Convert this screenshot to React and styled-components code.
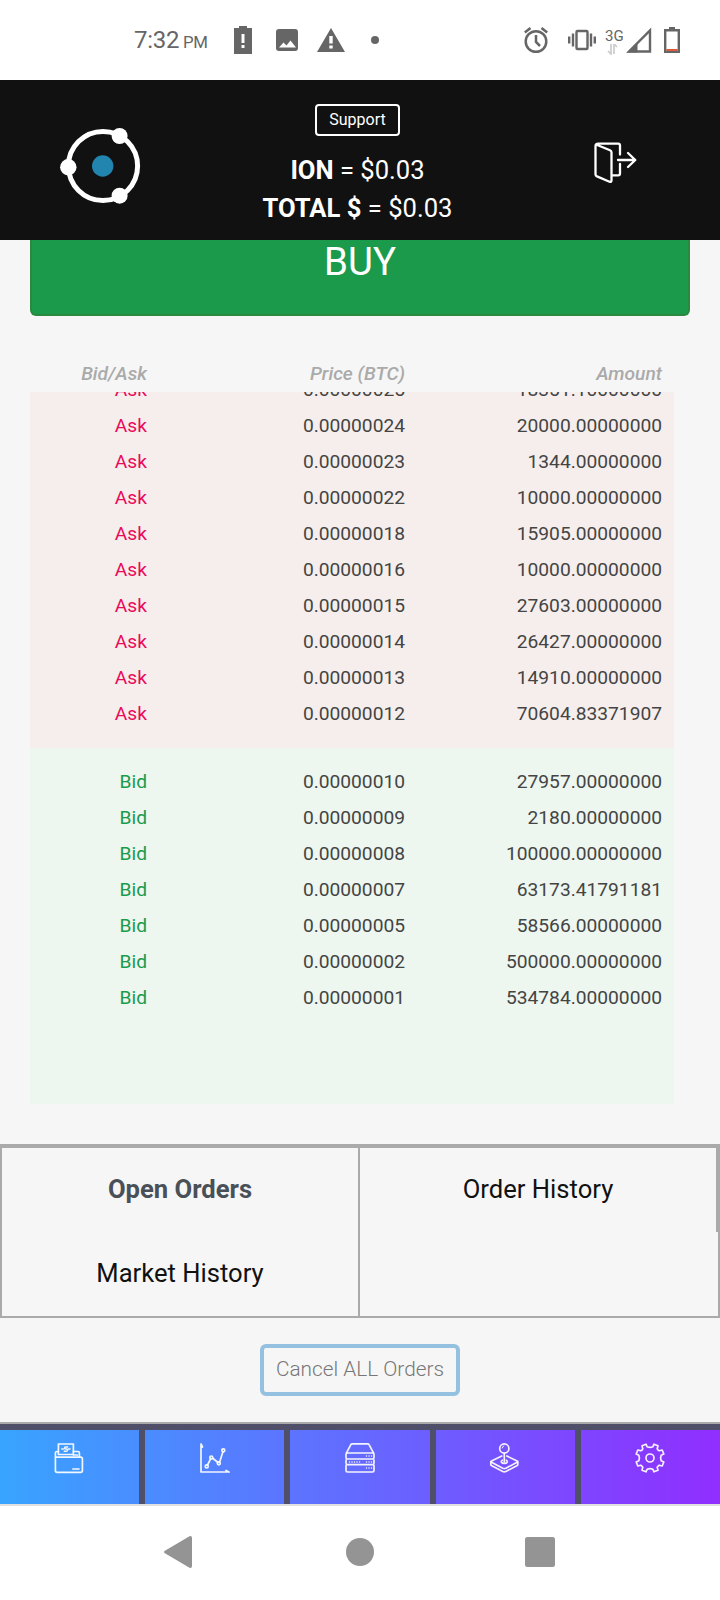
import React from 'react';
import styled, { createGlobalStyle } from 'styled-components';

const GlobalStyle = createGlobalStyle`
  * { box-sizing: border-box; }
  body { margin: 0; background: #f6f6f6; font-family: Roboto, sans-serif; }
  svg { display: block; flex: none; }
`;

const Screen = styled.div`
  width: 720px;
  height: 1600px;
  display: flex;
  flex-direction: column;
  overflow: hidden;
  background: #f6f6f6;
`;

const StatusBar = styled.div`
  height: 80px;
  flex: none;
  display: flex;
  align-items: center;
  padding-left: 134px;
  background: #fff;
  color: #666;
`;

const Clock = styled.div`
  width: 100px;
  font-size: 24px;
  line-height: 28px;
  padding-top: 2px;
  white-space: nowrap;
  letter-spacing: -0.3px;
`;

const Meridiem = styled.span`
  font-size: 16.8px;
  margin-left: 4px;
`;

const StatusIcon = styled.svg`
  margin-left: ${(p) => p.$gap || 0}px;
`;

const Network = styled.div`
  width: 21px;
  height: 28px;
  margin-left: 9px;
  padding-top: 2px;
  font-size: 15px;
  line-height: 16px;
`;

const Header = styled.header`
  height: 160px;
  flex: none;
  display: grid;
  grid-template-columns: 200px 315px 205px;
  background: #111;
  color: #fff;
`;

const LogoCell = styled.div`
  padding: 46px 0 0 58px;
`;

const Balances = styled.div`
  display: flex;
  flex-direction: column;
  align-items: center;
  padding-top: 24px;
`;

const SupportButton = styled.button`
  width: 85px;
  height: 32px;
  padding: 0;
  margin-bottom: 15px;
  border: 2px solid #fff;
  border-radius: 4px;
  background: transparent;
  color: #fff;
  font: 400 16px/26px Roboto, sans-serif;
`;

const BalanceLine = styled.div`
  font-size: 25.6px;
  line-height: 38px;
  white-space: nowrap;
`;

const ExitCell = styled.div`
  padding: 60px 0 0 77px;
`;

const BuyButton = styled.button`
  width: 660px;
  height: 76px;
  flex: none;
  margin: 0 30px;
  padding: 0 0 30px;
  border: 2px solid #2a883f;
  border-top: 0;
  border-radius: 0 0 6px 6px;
  background: #1b9a4b;
  color: #fff;
  font: 400 38.4px/40px Roboto, sans-serif;
`;

const OrderRow = styled.div`
  display: grid;
  grid-template-columns: 129px 258px 257px;
  height: 36px;
  font-size: 19.2px;
  line-height: 36px;
  text-align: right;
  color: #444;
`;

const Cell = styled.span`
  padding-right: 12px;
  white-space: nowrap;
  color: ${(p) => p.$color || 'inherit'};
`;

const TableHead = styled(OrderRow)`
  width: 644px;
  flex: none;
  margin: 40px 0 0 30px;
  font-style: italic;
  font-weight: 500;
  color: #aaa;
`;

const BookSide = styled.div`
  width: 644px;
  height: 356px;
  flex: none;
  margin-left: 30px;
  overflow: hidden;
  display: flex;
  flex-direction: column;
  justify-content: ${(p) => (p.$ask ? 'flex-end' : 'flex-start')};
  padding: 16px 0;
  background: ${(p) => (p.$ask ? '#f6eeec' : '#edf6ef')};
  ${OrderRow} { flex: none; }
`;

const Tabs = styled.div`
  height: 174px;
  flex: none;
  margin-top: 40px;
  display: grid;
  grid-template-columns: 358px 358px;
  grid-template-rows: 86px 84px;
  border: 2px solid #aaa;
`;

const Tab = styled.div`
  display: flex;
  align-items: center;
  justify-content: center;
  padding-bottom: 2px;
  font-size: 25.6px;
  line-height: 30px;
  white-space: nowrap;
  color: ${(p) => (p.$active ? '#495057' : '#111')};
  font-weight: ${(p) => (p.$active ? 700 : 400)};
  border-right: 2px solid #aaa;
  border-top: ${(p) => (p.$first ? '2px solid #aaa' : '0')};
`;

const Actions = styled.div`
  height: 104px;
  flex: none;
  display: flex;
  justify-content: center;
  padding-top: 26px;
`;

const CancelButton = styled.button`
  width: 200px;
  height: 52px;
  padding: 0 0 2px;
  border: 4px solid #94c1e0;
  border-radius: 6px;
  background: transparent;
  color: #777;
  font: 300 20.8px/30px Roboto, sans-serif;
  white-space: nowrap;
`;

const NavBar = styled.nav`
  height: 84px;
  flex: none;
  display: flex;
  border-top: 2px solid #aaa;
  border-bottom: 2px solid #e0e0e0;
  background: linear-gradient(90deg, #38a4ff, #902eff) padding-box;
`;

const NavItem = styled.div`
  flex: 1;
  border-top: 6px solid #4f4f69;
  display: flex;
  justify-content: center;
  padding: 12px 0 0;
`;

const NavDivider = styled.div`
  width: 6px;
  background: #4f4f69;
`;

const SystemBar = styled.div`
  flex: 1;
  display: flex;
  padding: 29px 0 0 163px;
  background: #fff;
`;

const SystemIcon = styled.svg`
  margin-right: ${(p) => p.$gap || 0}px;
`;

const asks = [
  ['0.00000025', '18351.10000000'],
  ['0.00000024', '20000.00000000'],
  ['0.00000023', '1344.00000000'],
  ['0.00000022', '10000.00000000'],
  ['0.00000018', '15905.00000000'],
  ['0.00000016', '10000.00000000'],
  ['0.00000015', '27603.00000000'],
  ['0.00000014', '26427.00000000'],
  ['0.00000013', '14910.00000000'],
  ['0.00000012', '70604.83371907'],
];

const bids = [
  ['0.00000010', '27957.00000000'],
  ['0.00000009', '2180.00000000'],
  ['0.00000008', '100000.00000000'],
  ['0.00000007', '63173.41791181'],
  ['0.00000005', '58566.00000000'],
  ['0.00000002', '500000.00000000'],
  ['0.00000001', '534784.00000000'],
];

function Orders({ side, color, rows }) {
  return rows.map(([price, amount]) => (
    <OrderRow key={price}>
      <Cell $color={color}>{side}</Cell>
      <Cell>{price}</Cell>
      <Cell>{amount}</Cell>
    </OrderRow>
  ));
}

function NavIcon({ shift = 0, children }) {
  return (
    <svg width="32" height="32" viewBox={`${-shift} 0 32 32`} fill="none" stroke="#fff" strokeOpacity="0.92" strokeWidth="1.7" strokeLinecap="round" strokeLinejoin="round">
      {children}
    </svg>
  );
}

const WalletIcon = () => (
  <NavIcon shift={-0.6}>
    <path d="M5 12.500V2h15v10.500z" />
    <path d="M8.300 7H10M15 7h1.700M14.300 5h-2.200q-1 0-1 1t1 1h1q1.100 0 1.100 1.100t-1.100 1.100h-2.300" strokeWidth="1.400" />
    <path d="M5 9.500H3.500Q2 9.500 2 11.500v17q0 1.800 1.800 1.800h23.400q1.800 0 1.800-1.800V17q0-1.800-1.800-1.800H3.800Q2 15.200 2 13.500M20 9.500h4.500q1.500 0 1.500 1.500v4M20 13h4" />
    <path d="M19.500 27h6" />
  </NavIcon>
);

const ChartIcon = () => (
  <NavIcon>
    <path d="M2 2v28h28M2 2l1.500 3M30 30l-3-1.500M8.500 23l3.300-6.500M14 16.500l5 4M20.800 19.500l3.200-10" />
    <circle cx="7.700" cy="24.400" r="1.500" /><circle cx="12.300" cy="15.500" r="1.500" />
    <circle cx="19.800" cy="21.300" r="1.500" /><circle cx="24.300" cy="8.300" r="1.500" />
  </NavIcon>
);

const ServerIcon = () => (
  <NavIcon>
    <path d="M2.500 10.800L6.700 2.800Q7.200 1.800 8.500 1.800h15q1.200 0 1.700 1l4.300 8" />
    <path d="M3.500 11h25q1.500 0 1.500 1.500v3q0 1.500-1.500 1.500h-25Q2 17 2 15.500v-3Q2 11 3.500 11zM2 18v3q0 1.700 1.500 1.700h25q1.500 0 1.500-1.700v-3M2 23.500V28.500Q2 30 3.500 30h25q1.500 0 1.500-1.500v-5" />
    <path d="M22.500 14h.01M25 14h.01M27.500 14h.01M22.500 20h.01M25 20h.01M27.500 20h.01M22.500 26h.01M25 26h.01M27.500 26h.01M5.500 20h.01M8 20h.01M10.500 20h.01M13 20h.01M15.500 20h.01" strokeWidth="1.500" />
  </NavIcon>
);

const JoystickIcon = () => (
  <NavIcon shift={-0.7}>
    <circle cx="16" cy="6.500" r="4.600" />
    <path d="M13.800 6q.2-1.500 1.700-2" strokeWidth="1" />
    <path d="M16 11.500V20M13.500 14l-10.300 5q-1.200.6 0 1.300l11.300 6q1.500.7 3 0l11.300-6q1.200-.7 0-1.300L18.500 14" />
    <path d="M2.500 20v2.500q0 .8 1 1.300l11 5.700q1.500.7 3 0l11-5.700q1-.5 1-1.300V20" />
    <path d="M14 18.200q-1.400.6-1 1.800.8 1.500 3 1.500t3-1.500q.4-1.200-1-1.800" />
  </NavIcon>
);

const GearIcon = () => (
  <NavIcon>
    <circle cx="16" cy="16" r="4" />
    <path d="M13.200 4.800Q16 6 18.800 4.800L20 2.200L24 3.800L23.200 6.800Q24 8.200 25.200 8.800L28.200 8L29.800 12L27.200 13.200Q26 16 27.200 18.800L29.800 20L28.200 24L25.200 23.200Q24 24 23.200 25.200L24 28.200L20 29.800L18.800 27.200Q16 26 13.200 27.200L12 29.800L8 28.200L8.800 25.200Q8 24 6.800 23.200L3.800 24L2.200 20L4.800 18.800Q6 16 4.800 13.200L2.200 12L3.800 8L6.800 8.800Q8.200 8.200 8.800 6.800L8 3.800L12 2.200Z" />
  </NavIcon>
);

const navIcons = [WalletIcon, ChartIcon, ServerIcon, JoystickIcon, GearIcon];

export default function App() {
  return (
    <Screen>
      <GlobalStyle />
      <StatusBar>
        <Clock>7:32<Meridiem>PM</Meridiem></Clock>
        <StatusIcon width="18" height="28" viewBox="0 0 18 28" fill="#666">
          <path fillRule="evenodd" d="M5 0h8v2h5v26H0V2h5zM7.500 8v9h3V8zm0 11v3h3v-3z" />
        </StatusIcon>
        <StatusIcon $gap={23} width="24" height="24" viewBox="0 0 24 24" fill="#666">
          <path fillRule="evenodd" d="M4 1h16q3 0 3 3v16q0 3-3 3H4q-3 0-3-3V4q0-3 3-3zM4 19.500h17l-5.500-7-4 5-3-3z" />
        </StatusIcon>
        <StatusIcon $gap={18} width="28" height="24" viewBox="0 0 28 24" fill="#666">
          <path fillRule="evenodd" d="M14 0L28 24H0zM12.300 8v7.500h3.400V8zm0 9.500v3h3.400v-3z" />
        </StatusIcon>
        <StatusIcon $gap={26} width="8" height="8"><circle cx="4" cy="4" r="4" fill="#666" /></StatusIcon>
        <StatusIcon $gap={144} width="26" height="28" viewBox="0 0 26 28" fill="none" stroke="#666" strokeWidth="2.500">
          <circle cx="13" cy="15.500" r="10.300" /><path d="M13 9v7l4 4M1.800 6.500L7.500 2M24.200 6.500L18.500 2" />
        </StatusIcon>
        <StatusIcon $gap={19} width="28" height="22" viewBox="0 0 28 22" fill="none" stroke="#666" strokeWidth="2.400">
          <rect x="8.500" y="2" width="11" height="18" rx="1" /><path d="M5 4.500v13M23 4.500v13M1.200 7.500v7M26.800 7.500v7" />
        </StatusIcon>
        <Network>
          3G
          <svg width="14" height="11" viewBox="0 0 14 11" fill="none" stroke="#ccc" strokeWidth="1.700"><path d="M6 0v10L3 7M9 10V0l3 3" /></svg>
        </Network>
        <StatusIcon width="26" height="26" viewBox="0 0 26 26">
          <path d="M3 24.500L24 3.500v21z" fill="none" stroke="#666" strokeWidth="2.400" /><path d="M1 25.500L11.500 15v10.500z" fill="#666" />
        </StatusIcon>
        <StatusIcon $gap={12} width="16" height="26" viewBox="0 0 16 26">
          <path d="M1.200 3.200h13.600v21.500H1.200z" fill="none" stroke="#666" strokeWidth="2.400" /><path d="M5 0h6v3H5z" fill="#666" /><path d="M2.400 22h11.200v2H2.400z" fill="#d95b3b" />
        </StatusIcon>
      </StatusBar>

      <Header>
        <LogoCell>
          <svg width="84" height="80" viewBox="58 126 84 80">
            <circle cx="103" cy="166" r="34.600" fill="none" stroke="#fff" strokeWidth="5" />
            <g fill="#fff"><circle cx="119.600" cy="136" r="8" /><circle cx="68.300" cy="167.300" r="8.200" /><circle cx="119.600" cy="195.700" r="8" /></g>
            <circle cx="102.700" cy="166" r="10.700" fill="#2185b0" />
          </svg>
        </LogoCell>
        <Balances>
          <SupportButton>Support</SupportButton>
          <BalanceLine><b>ION</b> = $0.03</BalanceLine>
          <BalanceLine><b>TOTAL $</b> = $0.03</BalanceLine>
        </Balances>
        <ExitCell>
          <svg width="46" height="46" viewBox="593 140 46 46" fill="none" stroke="#fff" strokeWidth="2.300" strokeLinecap="round" strokeLinejoin="round">
            <path d="M621 154.500V145.500q0-1.800-1.800-1.800h-20q-2.700 0-2.700 2.500v28q0 1.500 1.500 2.200l12.500 5.300q2 .6 2-1.200V152.500q0-1.500-1.500-2.200L597 144.500M613 175.300h6.200q1.800 0 1.800-1.800V164M619 160h17M629 153l7.300 7-7.300 7" />
          </svg>
        </ExitCell>
      </Header>

      <BuyButton>BUY</BuyButton>

      <TableHead><Cell>Bid/Ask</Cell><Cell>Price (BTC)</Cell><Cell>Amount</Cell></TableHead>
      <BookSide $ask><Orders side="Ask" color="#eb0a5a" rows={asks} /></BookSide>
      <BookSide><Orders side="Bid" color="#1b9a4b" rows={bids} /></BookSide>

      <Tabs>
        <Tab $first $active>Open Orders</Tab>
        <Tab $first>Order History</Tab>
        <Tab>Market History</Tab>
      </Tabs>
      <Actions><CancelButton>Cancel ALL Orders</CancelButton></Actions>

      <NavBar>
        {navIcons.map((Icon, i) => (
          <React.Fragment key={i}>
            {i > 0 && <NavDivider />}
            <NavItem><Icon /></NavItem>
          </React.Fragment>
        ))}
      </NavBar>
      <SystemBar>
        <SystemIcon $gap={150} width="30" height="34" viewBox="0 0 30 34" fill="#949494"><path d="M1.500 16L26.500 1.200Q29 .5 29 3v28q0 2.500-2.500 1.800L1.500 18q-1-1 0-2z" /></SystemIcon>
        <SystemIcon $gap={148} width="34" height="34"><circle cx="17" cy="17" r="14" fill="#949494" /></SystemIcon>
        <SystemIcon width="30" height="34"><rect y="2" width="30" height="30" rx="2.500" fill="#949494" /></SystemIcon>
      </SystemBar>
    </Screen>
  );
}
